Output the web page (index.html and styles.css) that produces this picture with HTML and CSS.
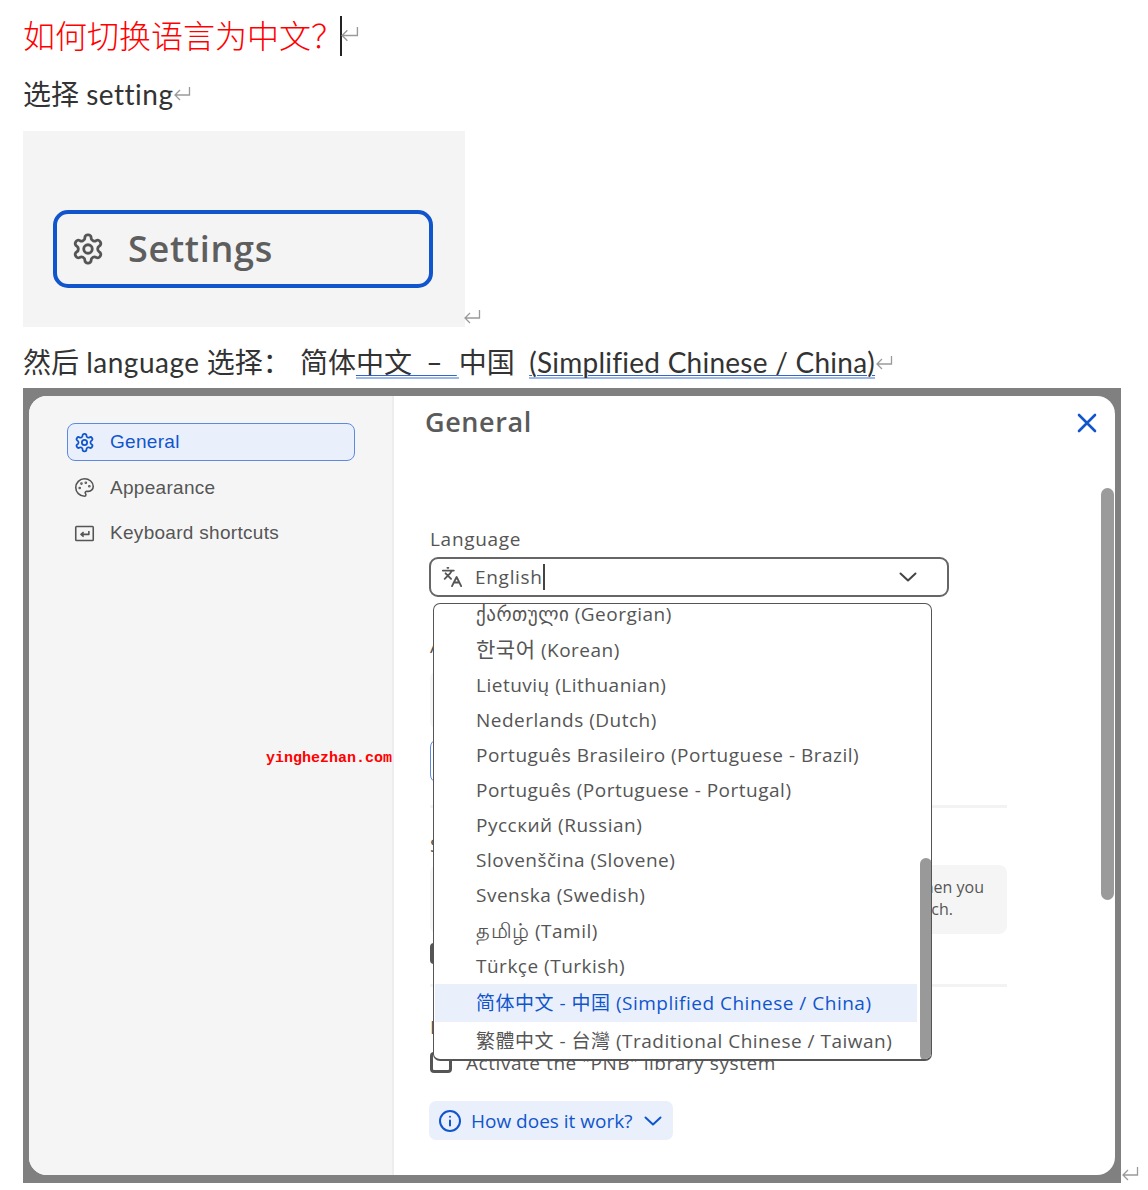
FILE: index.html
```html
<!DOCTYPE html>
<html lang="zh">
<head>
<meta charset="utf-8">
<title>如何切换语言为中文</title>
<link rel="stylesheet" href="styles.css">
</head>
<body>
<svg class="defs" width="0" height="0" aria-hidden="true">
  <symbol id="ret" viewBox="0 0 18 16"><path d="M16.5 1v8H2M7 4 2 9l5 5" fill="none" stroke="currentColor" stroke-width="1.3"/></symbol>
  <symbol id="gear" viewBox="0 0 24 24"><g fill="none" stroke="currentColor" stroke-width="2" stroke-linecap="round" stroke-linejoin="round"><path d="M12.22 2h-.44a2 2 0 0 0-2 2v.18a2 2 0 0 1-1 1.73l-.43.25a2 2 0 0 1-2 0l-.15-.08a2 2 0 0 0-2.73.73l-.22.38a2 2 0 0 0 .73 2.73l.15.1a2 2 0 0 1 1 1.72v.51a2 2 0 0 1-1 1.74l-.15.09a2 2 0 0 0-.73 2.73l.22.38a2 2 0 0 0 2.73.73l.15-.08a2 2 0 0 1 2 0l.43.25a2 2 0 0 1 1 1.73V20a2 2 0 0 0 2 2h.44a2 2 0 0 0 2-2v-.18a2 2 0 0 1 1-1.73l.43-.25a2 2 0 0 1 2 0l.15.08a2 2 0 0 0 2.73-.73l.22-.39a2 2 0 0 0-.73-2.73l-.15-.08a2 2 0 0 1-1-1.74v-.5a2 2 0 0 1 1-1.74l.15-.09a2 2 0 0 0 .73-2.73l-.22-.38a2 2 0 0 0-2.73-.73l-.15.08a2 2 0 0 1-2 0l-.43-.25a2 2 0 0 1-1-1.73V4a2 2 0 0 0-2-2z"/><circle cx="12" cy="12" r="3"/></g></symbol>
  <symbol id="chev" viewBox="0 0 18 10"><path d="M1.5 1.5 9 8.500l7.500-7" fill="none" stroke="currentColor" stroke-width="2" stroke-linecap="round" stroke-linejoin="round"/></symbol>
</svg>

<main class="doc">
  <p class="title">如何切换语言为中文？<span class="caret"></span><svg class="ret ret-title"><use href="#ret"/></svg></p>
  <p class="step"><span>选择 <span class="lat-a">setting</span></span><svg class="ret"><use href="#ret"/></svg></p>

  <div class="figure-row">
    <div class="figure">
      <div class="settings-btn">
        <svg class="settings-icon"><use href="#gear"/></svg>
        <span>Settings</span>
      </div>
    </div>
    <svg class="ret ret-figure"><use href="#ret"/></svg>
  </div>

  <p class="step step-lang">然后 <span class="lat-a">language</span> 选择： <span class="nudge">简体</span><span class="ul">中文&nbsp;&nbsp;–&nbsp;&nbsp;<span class="nudge-end"></span></span>中国&nbsp;&nbsp;<span class="ul lat-b">(Simplified Chinese / China)</span><svg class="ret"><use href="#ret"/></svg></p>

  <div class="shot-row">
    <div class="shot">
      <div class="dialog">
        <aside class="sidebar">
          <div class="nav-item nav-active">
            <svg class="nav-icon"><use href="#gear"/></svg>
            <span>General</span>
          </div>
          <div class="nav-item">
            <svg class="nav-icon" viewBox="0 0 24 24"><g fill="none" stroke="currentColor" stroke-width="1.8" stroke-linecap="round" stroke-linejoin="round"><circle cx="13.5" cy="6.5" r=".6"/><circle cx="17.5" cy="10.5" r=".6"/><circle cx="8.5" cy="7.5" r=".6"/><circle cx="6.5" cy="12.5" r=".6"/><path d="M12 2C6.5 2 2 6.5 2 12s4.5 10 10 10c.926 0 1.648-.746 1.648-1.688 0-.437-.18-.835-.437-1.125-.29-.289-.438-.652-.438-1.125a1.64 1.64 0 0 1 1.668-1.668h1.996c3.051 0 5.555-2.503 5.555-5.554C21.965 6.012 17.461 2 12 2z"/></g></svg>
            <span>Appearance</span>
          </div>
          <div class="nav-item">
            <svg class="nav-icon" viewBox="0 0 24 24"><g fill="none" stroke="currentColor" stroke-width="1.8" stroke-linejoin="round"><rect x="2" y="4" width="20" height="16" rx="1"/><path d="M17 9v4H8M11 10.500 8 13l3 2.500"/></g></svg>
            <span>Keyboard shortcuts</span>
          </div>
        </aside>

        <section class="pane">
          <h1 class="pane-title">General</h1>
          <svg class="close" viewBox="0 0 20 20"><path d="M2 2l16 16M18 2 2 18" fill="none" stroke="currentColor" stroke-width="2.600" stroke-linecap="round"/></svg>

          <div class="form">
            <label class="label">Language</label>
            <div class="select">
              <svg class="select-icon" viewBox="0 0 24 24"><g fill="none" stroke="currentColor" stroke-width="2" stroke-linecap="round" stroke-linejoin="round"><path d="m5 8 6 6M4 14l6-6 2-3M2 5h12M7 2h1M22 22l-5-10-5 10M14 18h6"/></g></svg>
              <span class="select-value">English</span>
              <svg class="select-chev"><use href="#chev"/></svg>
            </div>

            <label class="label label-hidden1">Appearance</label>
            <div class="ghost-box"></div>
            <div class="ghost-btn"></div>
            <hr class="sep sep-1">

            <label class="label label-hidden2">Search</label>
            <div class="info">
              <span class="info-line">Suggestions are displayed when you</span>
              <span class="info-line info-line-2">type in the search.</span>
            </div>
            <div class="check-row check-row-1"><span class="check"></span><span class="check-text">Enable search</span></div>
            <hr class="sep sep-2">

            <label class="label label-hidden3">Library</label>
            <div class="check-row check-row-2"><span class="check"></span><span class="check-text">Activate the "PNB" library system</span></div>

            <div class="how">
              <svg class="how-icon" viewBox="0 0 24 24"><g fill="none" stroke="currentColor" stroke-width="2" stroke-linecap="round"><circle cx="12" cy="12" r="10"/><path d="M12 16.500v-5M12 7.800h.01"/></g></svg>
              <span>How does it work?</span>
              <svg class="how-chev"><use href="#chev"/></svg>
            </div>
          </div>

          <div class="menu">
            <ul class="menu-list">
              <li class="menu-item menu-first">ქართული (Georgian)</li>
              <li class="menu-item menu-second"><span class="native-big">한국어</span> (Korean)</li>
              <li class="menu-item">Lietuvių (Lithuanian)</li>
              <li class="menu-item">Nederlands (Dutch)</li>
              <li class="menu-item">Português Brasileiro (Portuguese - Brazil)</li>
              <li class="menu-item">Português (Portuguese - Portugal)</li>
              <li class="menu-item">Русский (Russian)</li>
              <li class="menu-item">Slovenščina (Slovene)</li>
              <li class="menu-item">Svenska (Swedish)</li>
              <li class="menu-item menu-tamil"><span class="native-big">தமிழ்</span> (Tamil)</li>
              <li class="menu-item">Türkçe (Turkish)</li>
              <li class="menu-item menu-selected">简体中文 - 中国 (Simplified Chinese / China)</li>
              <li class="menu-item menu-last">繁體中文 - 台灣 (Traditional Chinese / Taiwan)</li>
            </ul>
            <div class="menu-thumb"></div>
          </div>
          <div class="pane-thumb"></div>
        </section>
      </div>
      <span class="watermark">yinghezhan.com</span>
    </div>
    <svg class="ret ret-shot"><use href="#ret"/></svg>
  </div>
</main>
</body>
</html>
```

FILE: styles.css
```css
* { box-sizing: border-box; }

html, body { margin: 0; padding: 0; background: #fff; }

body {
  font-family: "Open Sans", "Noto Sans CJK SC", "DejaVu Sans", sans-serif;
  color: #222;
}

.defs { position: absolute; }

.doc {
  width: 1148px;
  height: 1190px;
  padding-left: 23px;
  overflow: hidden;
}

.title, .step { margin: 0; white-space: nowrap; }

.title {
  height: 72px;
  padding-bottom: 4px;
  line-height: 68px;
  font-size: 32px;
  font-weight: 300;
  color: #f00;
  font-family: "Noto Sans CJK SC", sans-serif;
  display: flex;
  align-items: center;
}

.caret {
  width: 2px;
  height: 40px;
  background: #222;
  margin-top: 4px;
  margin-left: -3px;
}

.step {
  height: 44px;
  line-height: 44px;
  font-size: 28px;
  font-weight: 400;
  font-family: "Lato", "Noto Sans CJK SC", sans-serif;
  color: #333;
  display: flex;
  align-items: center;
}

.lat-a { letter-spacing: .5px; }
.lat-b { letter-spacing: .25px; }
.nudge { margin-left: 2px; }
.nudge-end { padding-right: 2px; }

.ret { width: 18px; height: 16px; color: #9a9a9a; flex: none; }
.ret-title { width: 19px; height: 23px; margin-left: -2px; }

.figure-row {
  display: flex;
  align-items: flex-end;
  margin-top: 15px;
}

.figure {
  width: 442px;
  height: 196px;
  background: #f4f4f4;
  padding: 79px 32px 39px 30px;
}

.ret-figure { margin-bottom: 2px; margin-left: -2px; }

.settings-btn {
  height: 78px;
  border: 4px solid #1155cc;
  border-radius: 15px;
  display: flex;
  align-items: center;
  gap: 23px;
  padding-left: 14px;
  font-size: 36px;
  font-weight: 600;
  letter-spacing: .7px;
  line-height: 44px;
  color: #5e5e5e;
}

.settings-icon { width: 34px; height: 34px; color: #555; }

.step-lang {
  display: block;
  height: 61px;
  line-height: 70px;
  white-space: pre;
}

.step-lang .ret { vertical-align: 2px; }

.ul {
  text-decoration: underline solid #3566c8;
  text-decoration-thickness: 1px;
  text-underline-offset: 1.500px;
  background: linear-gradient(#9db8ea, #9db8ea) left bottom / 100% 2px no-repeat;
}

.shot-row { display: flex; align-items: flex-end; }

.shot {
  position: relative;
  width: 1098px;
  height: 795px;
  padding: 8px 6px;
  background: #808080;
}

.ret-shot { margin-bottom: 1px; }

.dialog {
  display: flex;
  height: 779px;
  background: #fff;
  border-radius: 18px;
  overflow: hidden;
}

.sidebar {
  width: 365px;
  flex: none;
  padding: 27px 38px 0;
  background: #f5f5f5;
  border-right: 2px solid #ededed;
  display: flex;
  flex-direction: column;
  gap: 7.500px;
}

.nav-item {
  height: 38px;
  width: 288px;
  margin-right: -1px;
  display: flex;
  align-items: center;
  gap: 15px;
  padding-left: 6px;
  border: 1px solid transparent;
  border-radius: 8px;
  font-family: "Liberation Sans", sans-serif;
  font-size: 19px;
  letter-spacing: .3px;
  color: #555;
}

.nav-active {
  color: #1155cc;
  background: #e9f0fc;
  border-color: #5b8ae0;
}

.nav-icon { width: 21px; height: 21px; flex: none; }

.pane { position: relative; flex: 1; min-width: 0; }

.pane-title {
  margin: 0;
  position: absolute;
  left: 31px;
  top: 8px;
  font-size: 27px;
  line-height: 36px;
  font-weight: 600;
  letter-spacing: .6px;
  color: #5a5a5a;
}

.close {
  position: absolute;
  left: 683px;
  top: 17px;
  width: 20px;
  height: 20px;
  color: #1155cc;
}

.form {
  padding: 130px 108px 0 36px;
  color: #555;
}

.label {
  display: block;
  font-size: 19px;
  line-height: 26px;
  height: 26px;
  color: #555;
  letter-spacing: .7px;
}

.select {
  height: 40px;
  width: 520px;
  margin: 5px 0 0 -1px;
  display: flex;
  align-items: center;
  border: 2px solid #666;
  border-radius: 9px;
  padding-left: 10px;
  font-size: 19px;
  letter-spacing: .7px;
  color: #555;
}

.select-icon { width: 22px; height: 22px; flex: none; }
.select-value { margin-left: 12px; border-right: 2px solid #444; line-height: 26px; }
.select-chev { width: 18px; height: 10px; margin-left: auto; margin-right: 30px; color: #444; }

.label-hidden1 { margin-top: 36px; }

.ghost-box {
  height: 58px;
  width: 60px;
  margin-top: 12px;
  background: #f5f5f5;
  border-radius: 8px;
}

.ghost-btn {
  height: 44px;
  width: 60px;
  margin-top: 10px;
  border: 1px solid #5b8ae0;
  border-radius: 8px;
}

.sep { margin: 0; border: 0; height: 3px; background: #f3f3f3; }
.sep-1 { margin-top: 22px; }

.label-hidden2 { margin-top: 24px; }

.info {
  height: 69px;
  margin-top: 7px;
  padding: 11px 23px 0 0;
  background: #f5f5f5;
  border-radius: 8px;
  font-size: 16px;
  line-height: 22px;
  text-align: right;
  display: flex;
  flex-direction: column;
  white-space: nowrap;
}

.info-line-2 { padding-right: 31px; }

.check-row { display: flex; align-items: center; gap: 14px; height: 21px; font-size: 19px; letter-spacing: .55px; color: #555; white-space: nowrap; }
.check-row-1 { margin-top: 9px; }
.check-row-2 { margin-top: 12px; }

.check {
  width: 22px;
  height: 21px;
  flex: none;
  border: 3px solid #555;
  border-radius: 4px;
}

.sep-2 { margin-top: 20px; }

.label-hidden3 { margin-top: 27px; }

.how {
  width: 244px;
  height: 39px;
  margin: 28px 0 0 -1px;
  display: flex;
  align-items: center;
  padding-left: 9px;
  background: #e9f0fc;
  border-radius: 7px;
  color: #1155cc;
  font-size: 19px;
  white-space: nowrap;
}

.how-icon { width: 24px; height: 24px; flex: none; margin-right: 9px; }
.how-chev { width: 18px; height: 10px; margin-left: 12px; }

.menu {
  position: absolute;
  left: 39px;
  top: 207px;
  width: 499px;
  height: 458px;
  background: #fff;
  border: 1px solid #555;
  border-bottom-width: 2px;
  border-radius: 7px;
  overflow: hidden;
}

.menu-list {
  list-style: none;
  margin: 0;
  padding: 0 14px 0 1px;
  font-size: 19px;
  color: #555;
}

.menu-item {
  height: 35px;
  line-height: 35px;
  padding-left: 41px;
  white-space: nowrap;
  letter-spacing: .5px;
}

.native-big { font-size: 21px; }

.menu-first { height: 28px; line-height: 20px; }
.menu-second { height: 36px; }
.menu-tamil { height: 35.500px; }
.menu-selected {
  height: 38px;
  line-height: 39px;
  margin-top: .500px;
  color: #1155cc;
  background: #e9f0fc;
}
.menu-last { height: 38px; line-height: 38px; }

.menu-thumb {
  position: absolute;
  right: -1px;
  top: 254px;
  width: 12px;
  height: 203px;
  background: #999;
  border-radius: 6px;
}

.pane-thumb {
  position: absolute;
  right: 1px;
  top: 92px;
  width: 13px;
  height: 412px;
  background: #9b9b9b;
  border-radius: 7px;
}

.watermark {
  position: absolute;
  left: 243px;
  top: 362px;
  font-family: "Liberation Mono", monospace;
  font-size: 15px;
  font-weight: 700;
  line-height: 18px;
  color: #f00;
  white-space: nowrap;
}
```
